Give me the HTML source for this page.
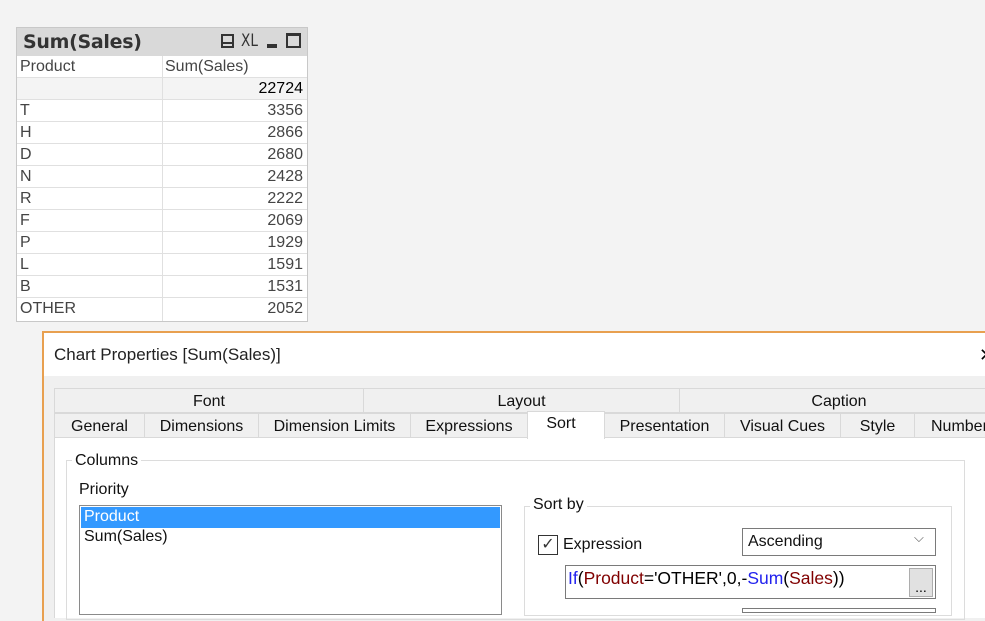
<!DOCTYPE html>
<html><head><style>
*{margin:0;padding:0;box-sizing:border-box}
body{width:985px;height:611px;background:#f3f3f3;position:relative;overflow:hidden;font-family:"Liberation Sans",sans-serif}
.a{position:absolute}
.tbl{left:16px;top:27px;width:292px;height:295px;border:1px solid #c8c8c8;background:#fff}
.tt{left:0;top:0;width:290px;height:28px;background:#d9d9d9;font:bold 19px "DejaVu Sans",sans-serif;color:#333;padding:3px 0 0 6px;letter-spacing:-0.3px}
.r{position:absolute;left:0;width:290px;height:22px;border-bottom:1px solid #e0e0e0;font:16px "Liberation Sans",sans-serif;color:#444}
.r span{position:absolute;top:2px}
.c1{left:3px}.c2{right:4px}
.vl{position:absolute;left:145px;top:28px;width:1px;height:265px;background:#e0e0e0}
.dlg{left:42px;top:331px;width:943px;height:290px;border-top:2px solid #e8a050;border-left:2px solid #e8a050;background:#f0f0f0}
.tab{position:absolute;height:25px;border:1px solid #d9d9d9;background:#f0f0f0;font-size:16px;color:#111;text-align:center;line-height:25px}
</style></head><body>
<div class="a tbl">
<div class="a tt">Sum(Sales)</div>
<div class="a" style="left:204px;top:6px;width:13px;height:14px;border:2px solid #333"></div>
<div class="a" style="left:204px;top:14px;width:13px;height:2px;background:#333"></div>
<div class="a" style="left:224px;top:3px;font:17px 'DejaVu Sans';color:#333;transform:scaleX(.8);transform-origin:left">XL</div>
<div class="a" style="left:250px;top:16px;width:10px;height:4px;background:#333"></div>
<div class="a" style="left:269px;top:5px;width:15px;height:15px;border:2px solid #333;border-top-width:3px"></div>
<div class="r" style="top:28px;background:#fff"><span class="c1">Product</span><span style="left:148px;top:2px">Sum(Sales)</span></div>
<div class="r" style="top:50px;background:#f4f4f4"><span class="c2" style="color:#000">22724</span></div>
<div class="r" style="top:72px"><span class="c1">T</span><span class="c2">3356</span></div>
<div class="r" style="top:94px"><span class="c1">H</span><span class="c2">2866</span></div>
<div class="r" style="top:116px"><span class="c1">D</span><span class="c2">2680</span></div>
<div class="r" style="top:138px"><span class="c1">N</span><span class="c2">2428</span></div>
<div class="r" style="top:160px"><span class="c1">R</span><span class="c2">2222</span></div>
<div class="r" style="top:182px"><span class="c1">F</span><span class="c2">2069</span></div>
<div class="r" style="top:204px"><span class="c1">P</span><span class="c2">1929</span></div>
<div class="r" style="top:226px"><span class="c1">L</span><span class="c2">1591</span></div>
<div class="r" style="top:248px"><span class="c1">B</span><span class="c2">1531</span></div>
<div class="r" style="top:270px;border:none"><span class="c1">OTHER</span><span class="c2">2052</span></div>
<div class="vl"></div>
</div>
<div class="a dlg">
<div class="a" style="left:0;top:0;width:943px;height:43px;background:#fff;font-size:17px;color:#222;padding:12px 0 0 10px">Chart Properties [Sum(Sales)]</div>
<div class="a" style="left:935px;top:12px;font-size:18px;color:#000">✕</div>
</div>
<div class="tab" style="left:54px;top:388px;width:310px">Font</div>
<div class="tab" style="left:363px;top:388px;width:317px">Layout</div>
<div class="tab" style="left:679px;top:388px;width:320px">Caption</div>
<div class="tab" style="left:54px;top:413px;width:91px">General</div>
<div class="tab" style="left:144px;top:413px;width:115px">Dimensions</div>
<div class="tab" style="left:258px;top:413px;width:153px">Dimension Limits</div>
<div class="tab" style="left:410px;top:413px;width:118px">Expressions</div>
<div class="tab" style="left:604px;top:413px;width:121px">Presentation</div>
<div class="tab" style="left:724px;top:413px;width:117px">Visual Cues</div>
<div class="tab" style="left:840px;top:413px;width:75px">Style</div>
<div class="tab" style="left:914px;top:413px;width:90px;text-align:left;padding-left:16px">Number</div>
<div class="a" style="left:54px;top:438px;width:940px;height:180px;background:#fff;border-left:1px solid #d9d9d9"></div>
<div class="tab" style="left:527px;top:411px;width:78px;height:28px;background:#fff;border-bottom:none;line-height:24px;padding-right:10px">Sort</div>
<div class="a" style="left:66px;top:460px;width:899px;height:160px;border:1px solid #dcdcdc"></div>
<div class="a" style="left:72px;top:452px;background:#fff;padding:0 3px;font-size:16px;color:#111">Columns</div>
<div class="a" style="left:79px;top:481px;font-size:16px;color:#111">Priority</div>
<div class="a" style="left:79px;top:505px;width:423px;height:110px;border:1px solid #8a8a8a;background:#fff"></div>
<div class="a" style="left:81px;top:507px;width:419px;height:21px;background:#3399ff;color:#fff;font-size:16px;padding:1px 0 0 3px">Product</div>
<div class="a" style="left:84px;top:528px;font-size:16px;color:#111">Sum(Sales)</div>
<div class="a" style="left:524px;top:506px;width:428px;height:110px;border:1px solid #dcdcdc"></div>
<div class="a" style="left:530px;top:496px;background:#fff;padding:0 3px;font-size:16px;color:#111">Sort by</div>
<div class="a" style="left:538px;top:535px;width:20px;height:20px;border:1px solid #333;font-size:16px;line-height:18px;text-align:center;color:#333">✓</div>
<div class="a" style="left:563px;top:536px;font-size:16px;color:#111">Expression</div>
<div class="a" style="left:742px;top:528px;width:194px;height:28px;border:1px solid #7a7a7a;font-size:16px;color:#111;padding:4px 0 0 5px">Ascending</div>
<div class="a" style="left:914px;top:530px;font-size:13px;color:#555">⌵</div>
<div class="a" style="left:565px;top:565px;width:371px;height:34px;border:1px solid #7a7a7a;font-size:17.5px;padding:2px 0 0 2px;color:#000"><span style="color:#2222ee">If</span>(<span style="color:#800000">Product</span>='OTHER',0,-<span style="color:#2222ee">Sum</span>(<span style="color:#800000">Sales</span>))</div>
<div class="a" style="left:909px;top:568px;width:24px;height:29px;background:#e1e1e1;border:1px solid #adadad;font-size:14px;text-align:center;line-height:36px">...</div>
<div class="a" style="left:742px;top:608px;width:194px;height:5px;border:1px solid #7a7a7a"></div>
</body></html>
